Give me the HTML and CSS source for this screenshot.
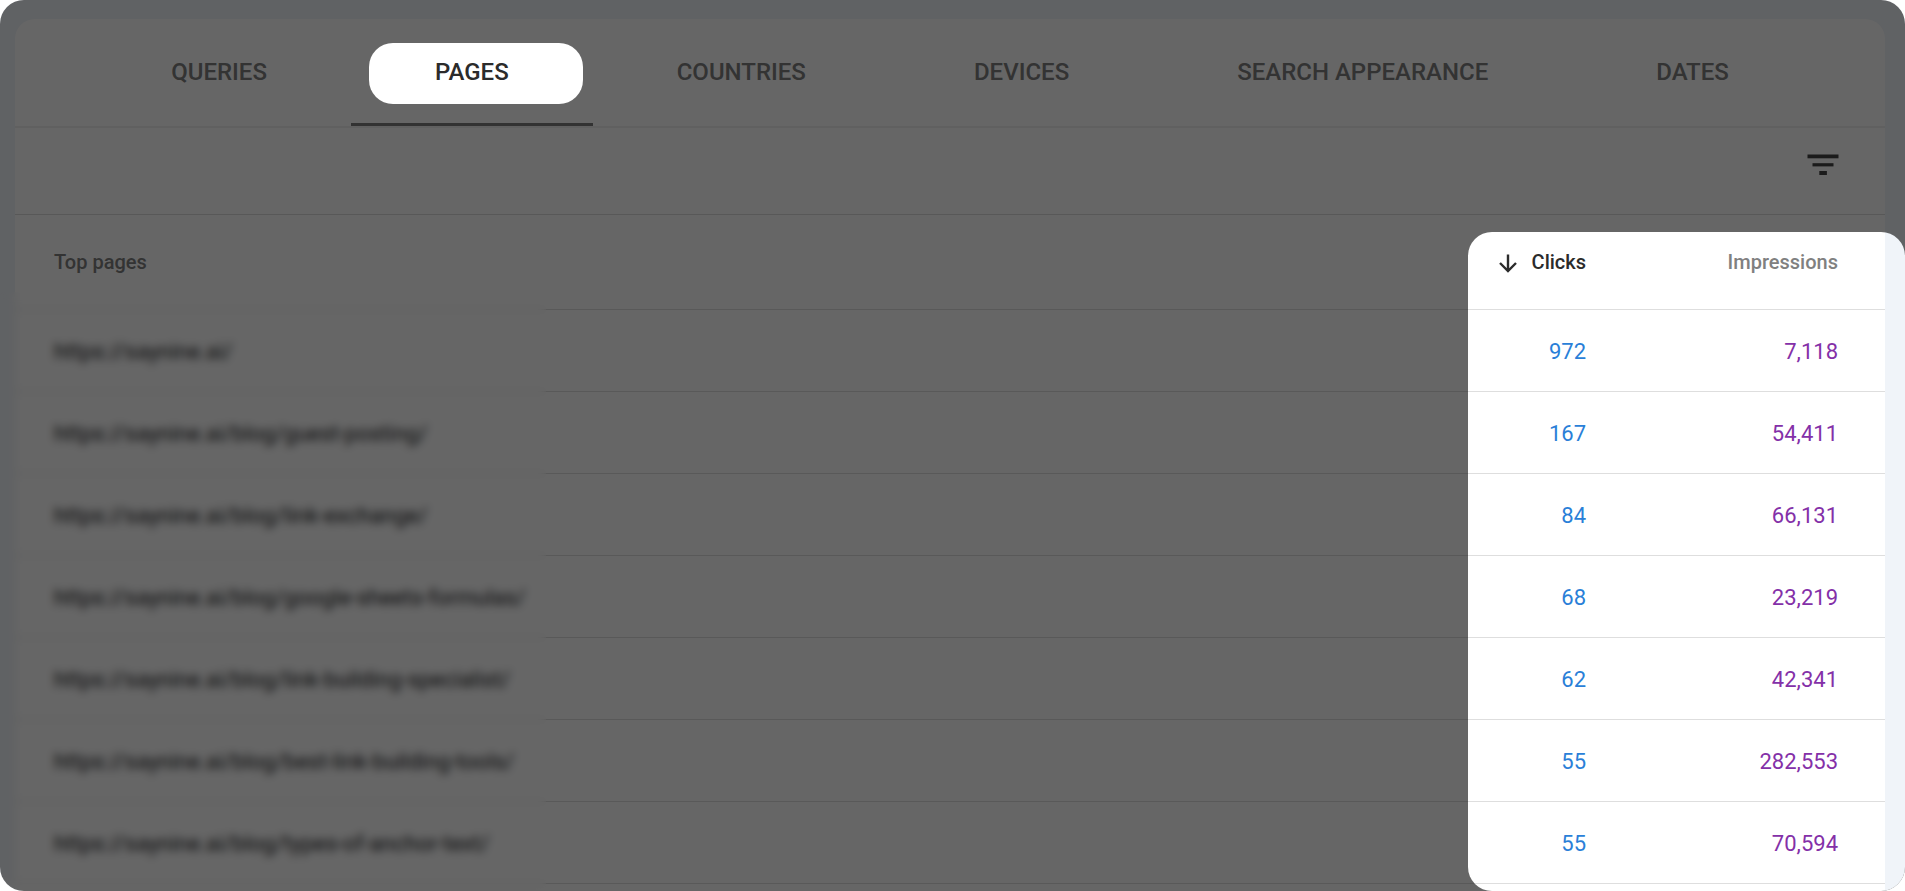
FILE: index.html
```html
<!DOCTYPE html>
<html lang="en">

<head>
    <meta charset="UTF-8">
    <meta name="viewport" content="width=device-width, initial-scale=1.0">
    <title>Search performance - Pages</title>
    <link rel="stylesheet" href="styles.css">
</head>

<body>
    <main class="shell">
        <section class="card">
            <nav>
                <ul class="tabs">
                    <li class="tab"><button type="button">QUERIES</button></li>
                    <li class="tab active"><button type="button">PAGES</button></li>
                    <li class="tab"><button type="button">COUNTRIES</button></li>
                    <li class="tab"><button type="button">DEVICES</button></li>
                    <li class="tab"><button type="button">SEARCH APPEARANCE</button></li>
                    <li class="tab"><button type="button">DATES</button></li>
                </ul>
            </nav>

            <div class="toolbar">
                <button type="button" class="filter" aria-label="Filter rows">
                    <svg width="32" height="22" viewBox="0 0 32 22" fill="currentColor">
                        <rect x="0.5" y="0.5" width="31" height="3.8" />
                        <rect x="5.5" y="9.2" width="21" height="3.2" />
                        <rect x="12.3" y="17" width="7.6" height="4" />
                    </svg>
                </button>
            </div>

            <table>
                <thead>
                    <tr>
                        <th class="page" scope="col">Top pages</th>
                        <th class="clicks" scope="col">
                            <svg width="18" height="19" viewBox="0 0 18 19" fill="none" stroke="currentColor" stroke-width="2.4">
                                <path d="M9 0.5V17M1 9l8 8 8-8" />
                            </svg>
                            Clicks
                        </th>
                        <th class="impressions" scope="col">Impressions</th>
                    </tr>
                </thead>
                <tbody>
                    <tr>
                        <td class="page"><a href="#">https://saynine.ai/</a></td>
                        <td class="clicks">972</td>
                        <td class="impressions">7,118</td>
                    </tr>
                    <tr>
                        <td class="page"><a href="#">https://saynine.ai/blog/guest-posting/</a></td>
                        <td class="clicks">167</td>
                        <td class="impressions">54,411</td>
                    </tr>
                    <tr>
                        <td class="page"><a href="#">https://saynine.ai/blog/link-exchange/</a></td>
                        <td class="clicks">84</td>
                        <td class="impressions">66,131</td>
                    </tr>
                    <tr>
                        <td class="page"><a href="#">https://saynine.ai/blog/google-sheets-formulas/</a></td>
                        <td class="clicks">68</td>
                        <td class="impressions">23,219</td>
                    </tr>
                    <tr>
                        <td class="page"><a href="#">https://saynine.ai/blog/link-building-specialist/</a></td>
                        <td class="clicks">62</td>
                        <td class="impressions">42,341</td>
                    </tr>
                    <tr>
                        <td class="page"><a href="#">https://saynine.ai/blog/best-link-building-tools/</a></td>
                        <td class="clicks">55</td>
                        <td class="impressions">282,553</td>
                    </tr>
                    <tr>
                        <td class="page"><a href="#">https://saynine.ai/blog/types-of-anchor-text/</a></td>
                        <td class="clicks">55</td>
                        <td class="impressions">70,594</td>
                    </tr>
                </tbody>
            </table>
        </section>

        <div class="redact"></div>
        <div class="spotlight"></div>
    </main>
</body>

</html>
```

FILE: styles.css
```css
* {
    box-sizing: border-box;
}

body {
    margin: 0;
    background: #fff;
    font-family: Roboto, "Liberation Sans", sans-serif;
}

button {
    border: 0;
    background: none;
    font: inherit;
    color: inherit;
    cursor: pointer;
}

.shell {
    position: relative;
    display: flex;
    min-height: 100vh;
    padding: 19px 20px 0 15px;
    background: #f0f4f9;
    border-radius: 24px;
    overflow: hidden;
}

.card {
    flex: 1;
    background: #fff;
    border-radius: 20px 20px 0 0;
}

/* Tabs */
.tabs {
    display: flex;
    justify-content: center;
    margin: 0;
    padding: 0;
    list-style: none;
    border-bottom: 2px solid #f0f0f0;
}

.tab {
    height: 107px;
    padding-top: 24px;
    font-size: 24px;
    font-weight: 500;
    color: #808080;
}

.tab button {
    height: 61px;
    padding: 0 84px 3px;
    white-space: nowrap;
}

.tab.active {
    border-bottom: 3px solid #7d7d7d;
    color: #2b2b2b;
}

/* sits above the dimmed layer */
.tab.active button {
    position: relative;
    z-index: 3;
    margin: 0 10px 0 18px;
    padding: 0 74px 3px 66px;
    background: #fff;
    border-radius: 24px;
}

/* Toolbar */
.toolbar {
    display: flex;
    justify-content: flex-end;
    height: 87px;
    padding: 26px 46px 0 0;
    border-bottom: 1px solid #dcdcdc;
}

.filter {
    height: 22px;
    padding: 0;
    color: #444;
}

.filter svg {
    display: block;
}

/* Table */
table {
    width: 100%;
    border-collapse: separate;
    border-spacing: 0;
    table-layout: fixed;
}

th,
td {
    height: 82px;
    padding: 2px 0 0;
    border-bottom: 1px solid #dedede;
    font-size: 22px;
    font-weight: 400;
    text-align: right;
}

th {
    height: 95px;
    padding-top: 0;
    font-size: 20px;
    font-weight: 500;
    color: #808080;
}

.page {
    padding-left: 39px;
    text-align: left;
}

.page a {
    color: #202124;
    text-decoration: none;
}

.clicks {
    width: 120px;
    color: #2a7fd8;
}

th.clicks {
    color: #2b2b2b;
}

.clicks svg {
    margin-right: 10px;
    vertical-align: -4px;
}

.impressions {
    width: 299px;
    padding-right: 47px;
    color: #8430a8;
}

th.impressions {
    color: #808080;
}

/* Hides the page addresses */
.redact {
    position: absolute;
    top: 292px;
    bottom: 0;
    left: 0;
    width: 546px;
    backdrop-filter: blur(4px);
}

/* Darkens everything except the numbers */
.spotlight {
    position: absolute;
    z-index: 2;
    top: 232px;
    right: 0;
    bottom: 0;
    width: 437px;
    border-radius: 24px;
    box-shadow: 0 0 0 9999px rgba(0, 0, 0, 0.6);
    pointer-events: none;
}
```
